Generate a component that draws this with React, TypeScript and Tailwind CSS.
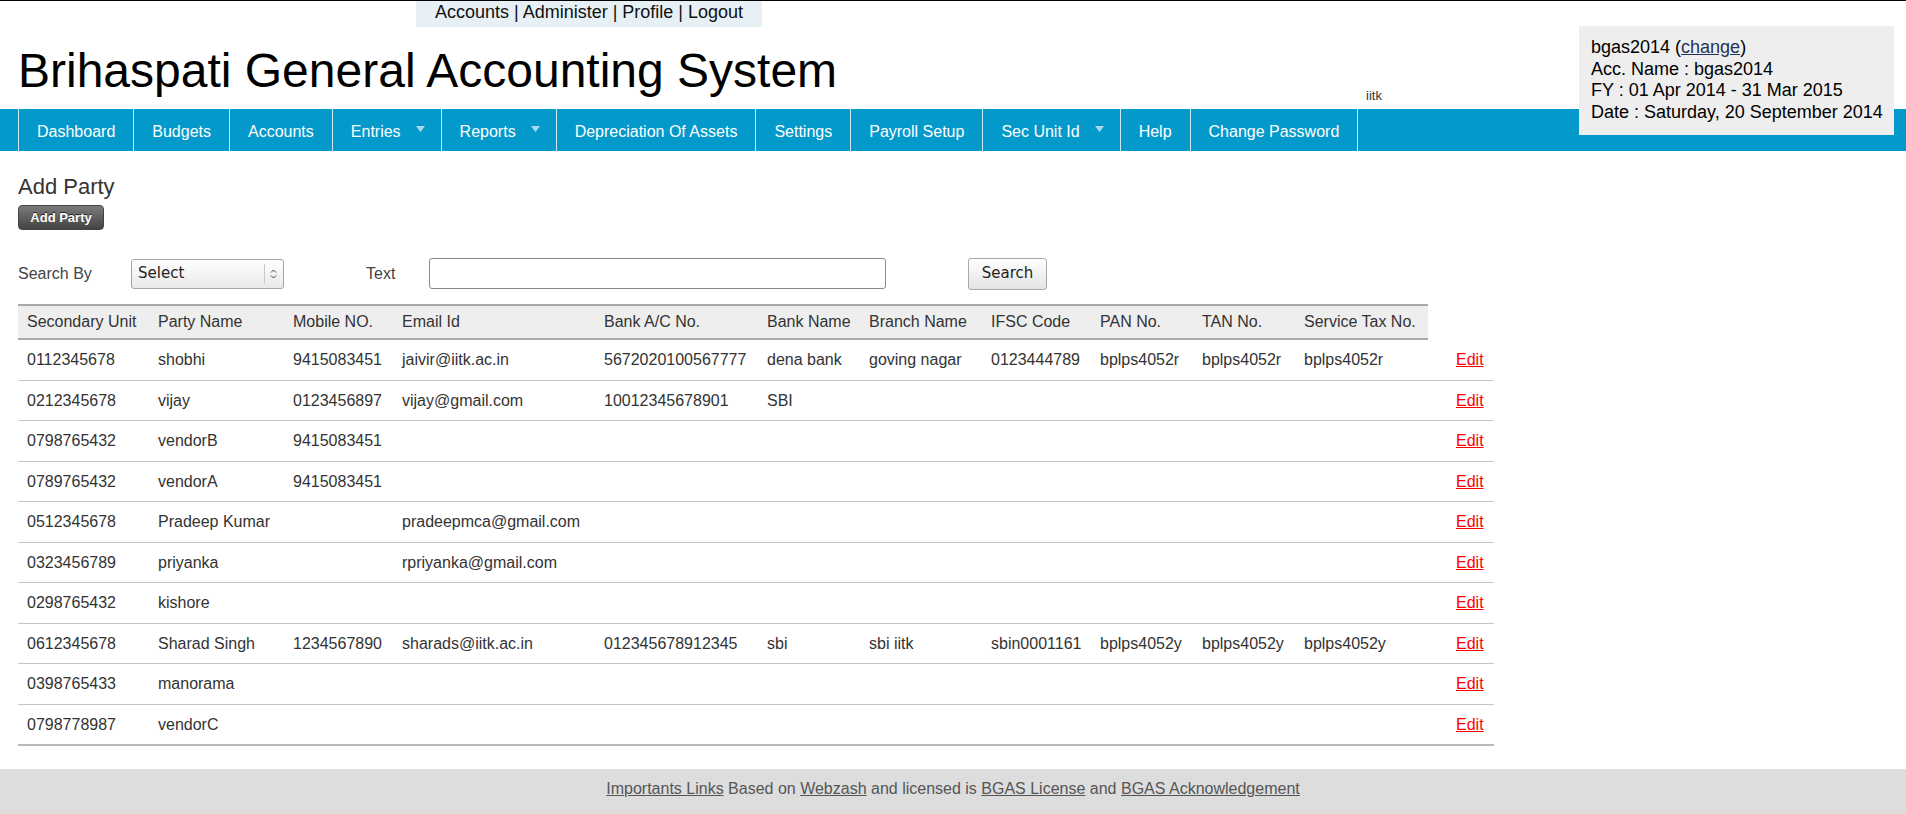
import { ReactNode } from "react";

const navItems = [
  { label: "Dashboard" },
  { label: "Budgets" },
  { label: "Accounts" },
  { label: "Entries", menu: true },
  { label: "Reports", menu: true },
  { label: "Depreciation Of Assets" },
  { label: "Settings" },
  { label: "Payroll Setup" },
  { label: "Sec Unit Id", menu: true },
  { label: "Help" },
  { label: "Change Password" },
];

const headers = [
  "Secondary Unit",
  "Party Name",
  "Mobile NO.",
  "Email Id",
  "Bank A/C No.",
  "Bank Name",
  "Branch Name",
  "IFSC Code",
  "PAN No.",
  "TAN No.",
  "Service Tax No.",
];

const parties = [
  ["0112345678", "shobhi", "9415083451", "jaivir@iitk.ac.in", "5672020100567777", "dena bank", "goving nagar", "0123444789", "bplps4052r", "bplps4052r", "bplps4052r"],
  ["0212345678", "vijay", "0123456897", "vijay@gmail.com", "10012345678901", "SBI", "", "", "", "", ""],
  ["0798765432", "vendorB", "9415083451", "", "", "", "", "", "", "", ""],
  ["0789765432", "vendorA", "9415083451", "", "", "", "", "", "", "", ""],
  ["0512345678", "Pradeep Kumar", "", "pradeepmca@gmail.com", "", "", "", "", "", "", ""],
  ["0323456789", "priyanka", "", "rpriyanka@gmail.com", "", "", "", "", "", "", ""],
  ["0298765432", "kishore", "", "", "", "", "", "", "", "", ""],
  ["0612345678", "Sharad Singh", "1234567890", "sharads@iitk.ac.in", "012345678912345", "sbi", "sbi iitk", "sbin0001161", "bplps4052y", "bplps4052y", "bplps4052y"],
  ["0398765433", "manorama", "", "", "", "", "", "", "", "", ""],
  ["0798778987", "vendorC", "", "", "", "", "", "", "", "", ""],
];

function FooterLink({ children }: { children: ReactNode }) {
  return (
    <a href="#" className="text-[#555] underline">
      {children}
    </a>
  );
}

export default function App() {
  return (
    <div className="relative min-h-screen border-t border-black bg-white font-['Liberation_Sans',Arial,sans-serif] text-[#333]">

      {/* top header */}
      <div className="relative h-[108px]">

        <div className="ml-[416px] h-[26px] w-[346px] bg-[#e6f0f5] text-center text-[18px] leading-[22px] text-[#111]">
          Accounts | Administer | Profile | Logout
        </div>

        <h1 className="mt-[20px] pl-[18px] text-[48px] font-normal leading-[48px] text-black">
          Brihaspati General Accounting System
        </h1>

        <span className="absolute left-[1366px] top-[87px] text-[13px] leading-[15px] text-[#333]">
          iitk
        </span>

      </div>

      {/* navigation */}
      <nav className="flex h-[42px] bg-[#0399cb] pl-[18px]">
        <div className="flex border-l border-white/80">
          {navItems.map((item) => (
            <a
              key={item.label}
              href="#"
              className={`flex items-center border-r border-white/80 pt-[3px] text-[16px] text-white ${
                item.menu ? "gap-[15px] pl-[18px] pr-[16px]" : "px-[18px]"
              }`}
            >
              <span>{item.label}</span>
              {item.menu && (
                <svg width="9" height="6" viewBox="0 0 9 6" className="-mt-[5px]">
                  <path d="M0 0 H9 L4.5 6 Z" fill="#a9daee" />
                </svg>
              )}
            </a>
          ))}
        </div>
      </nav>

      {/* account info */}
      <div className="absolute right-[12px] top-[25px] w-[315px] bg-[#eeeeee] pb-[12px] pl-[12px] pt-[11px] text-[18px] leading-[21.5px] text-black">
        <p>
          bgas2014 (<a href="#" className="text-[#25325a] underline">change</a>)
        </p>
        <p>Acc. Name : bgas2014</p>
        <p>FY : 01 Apr 2014 - 31 Mar 2015</p>
        <p>Date : Saturday, 20 September 2014</p>
      </div>

      {/* content */}
      <main className="px-[18px]">

        <h2 className="mt-[23px] text-[22px] font-normal leading-[25px] text-[#333]">
          Add Party
        </h2>

        <button className="mt-[6px] flex h-[25px] w-[86px] items-center justify-center rounded-[4px] border border-[#444] bg-gradient-to-b from-[#7c7c7c] to-[#434343] text-[13px] font-bold text-white [text-shadow:0_-1px_0_#222]">
          Add Party
        </button>

        <div className="mt-[28px] flex h-[31px] items-center">

          <span className="w-[113px] text-[16px] text-[#444]">
            Search By
          </span>

          <div className="flex h-[30px] w-[153px] items-center rounded-[3px] border border-[#a5a5a5] bg-gradient-to-b from-white to-[#e9e9e9] font-['DejaVu_Sans',sans-serif] text-[15px] text-[#222]">
            <span className="flex-1 pl-[6px]">Select</span>
            <span className="h-[20px] w-px bg-[#c8c8c8]" />
            <svg width="17" height="12" viewBox="0 0 17 12" className="mr-[1px]">
              <path d="M6 4.5 L8.5 2 L11 4.5 M6 7.5 L8.5 10 L11 7.5" fill="none" stroke="#444" strokeWidth="1" />
            </svg>
          </div>

          <span className="ml-[82px] w-[63px] text-[16px] text-[#444]">
            Text
          </span>

          <input
            type="text"
            className="h-[31px] w-[457px] rounded-[3px] border border-[#8a8a8a] bg-white px-[4px] text-[15px] outline-none"
          />

          <button className="ml-[82px] flex h-[32px] w-[79px] items-center justify-center rounded-[3px] border border-[#a9a9a9] bg-gradient-to-b from-white to-[#e4e4e4] font-['DejaVu_Sans',sans-serif] text-[15px] text-[#222]">
            Search
          </button>

        </div>

        <table className="mt-[15px] w-[1476px] table-fixed border-collapse text-[16px] text-[#333]">

          <colgroup>
            <col className="w-[131px]" />
            <col className="w-[135px]" />
            <col className="w-[109px]" />
            <col className="w-[202px]" />
            <col className="w-[163px]" />
            <col className="w-[102px]" />
            <col className="w-[122px]" />
            <col className="w-[109px]" />
            <col className="w-[102px]" />
            <col className="w-[102px]" />
            <col className="w-[133px]" />
            <col className="w-[66px]" />
          </colgroup>

          <thead>
            <tr>
              {headers.map((h) => (
                <th
                  key={h}
                  className="whitespace-nowrap border-b-2 border-t-2 border-[#a9a9a9] bg-[#eeeeee] py-[6px] pl-[9px] text-left font-normal leading-[20px]"
                >
                  {h}
                </th>
              ))}
            </tr>
          </thead>

          <tbody>
            {parties.map((row, i) => (
              <tr
                key={row[0]}
                className={i === parties.length - 1 ? "border-b-2 border-[#b9b9b9]" : "border-b border-[#c4c4c4]"}
              >
                {row.map((cell, j) => (
                  <td key={j} className="whitespace-nowrap py-[10px] pl-[9px] leading-[19.5px]">
                    {cell}
                  </td>
                ))}
                <td className="py-[10px] pl-[28px] leading-[19.5px]">
                  <a href="#" className="text-[#ff0000] underline">
                    Edit
                  </a>
                </td>
              </tr>
            ))}
          </tbody>

        </table>

      </main>

      <footer className="mt-[23px] h-[46px] bg-[#dddddd] pt-[11px] text-center text-[16px] leading-[18px] text-[#555]">
        <FooterLink>Importants Links</FooterLink> Based on <FooterLink>Webzash</FooterLink> and licensed is{" "}
        <FooterLink>BGAS License</FooterLink> and <FooterLink>BGAS Acknowledgement</FooterLink>
      </footer>

    </div>
  );
}
